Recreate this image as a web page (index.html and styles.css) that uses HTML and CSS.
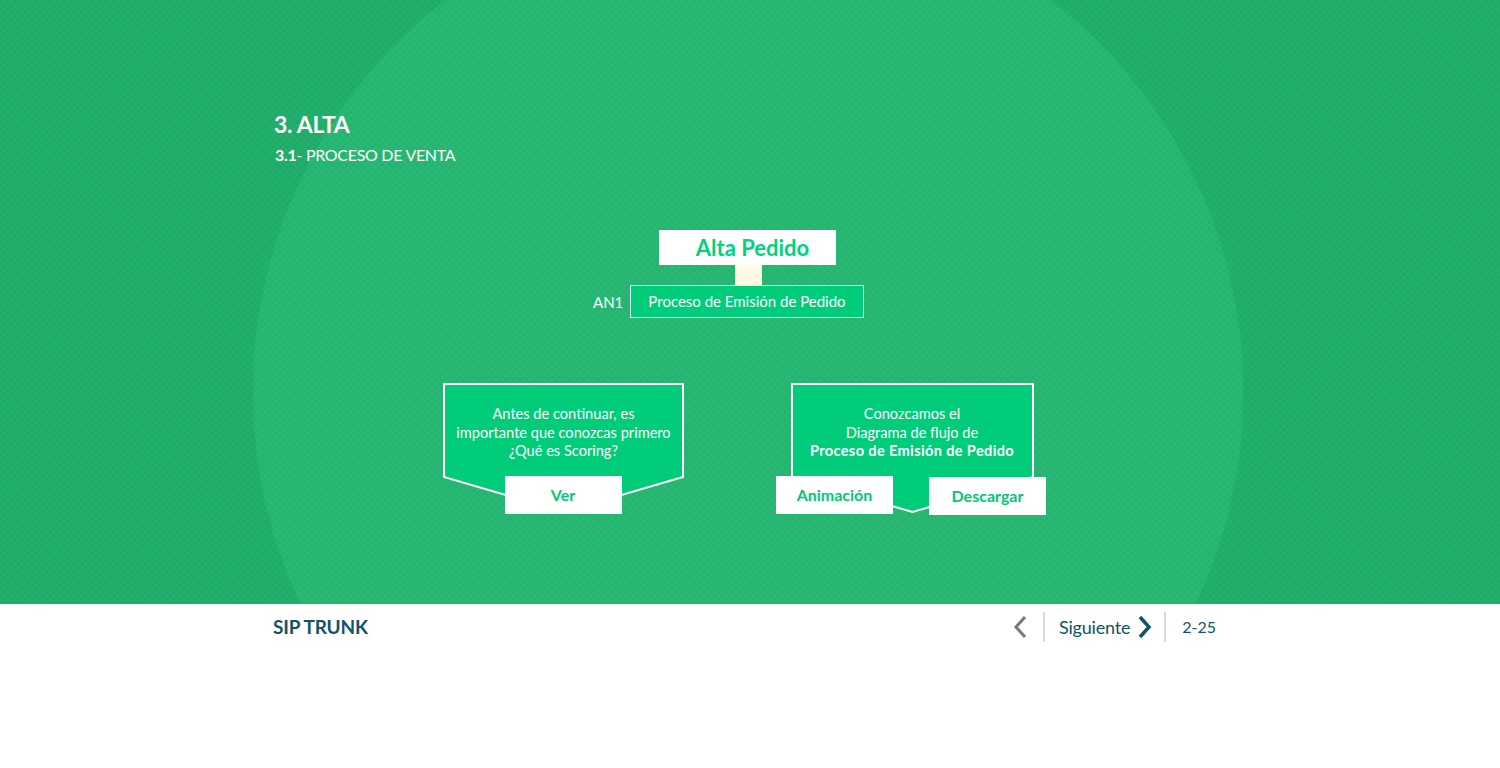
FILE: index.html
```html
<!DOCTYPE html>
<html lang="es">
<head>
<meta charset="utf-8">
<title>SIP TRUNK - Alta</title>
<link rel="stylesheet" href="styles.css">
</head>
<body>
<main class="stage">
  <div class="wrap">
    <header class="heading">
      <h1 class="title">3. ALTA</h1>
      <h2 class="subtitle"><b>3.1</b>- PROCESO DE VENTA</h2>
    </header>
    <section class="diagram">
      <div class="alta">Alta Pedido</div>
      <div class="connector"></div>
      <div class="proc-row">
        <span class="code">AN1</span>
        <div class="proc">Proceso de Emisión de Pedido</div>
      </div>
      <div class="cards">
        <div class="card card-left">
          <svg class="card-shape" width="241" height="131" viewBox="0 0 241 131"><polygon points="1,1 240,1 240,94 120.5,129 1,94" /></svg>
          <p class="card-text">Antes de continuar, es<br>importante que conozcas primero<br>¿Qué es Scoring?</p>
          <div class="btns btns-one"><a class="btn">Ver</a></div>
        </div>
        <div class="card card-right">
          <svg class="card-shape" width="243" height="131" viewBox="0 0 243 131"><polygon points="1,1 242,1 242,94 121.5,129 1,94" /></svg>
          <p class="card-text">Conozcamos el<br>Diagrama de flujo de<br><b>Proceso de Emisión de Pedido</b></p>
          <div class="btns btns-two"><a class="btn">Animación</a><a class="btn btn-low">Descargar</a></div>
        </div>
      </div>
    </section>
  </div>
</main>
<footer class="foot">
  <div class="foot-row">
    <div class="brand">SIP TRUNK</div>
    <nav class="nav">
      <span class="nav-prev"><svg width="16" height="24" viewBox="0 0 16 24"><polyline points="13,2 4,12 13,22" /></svg></span>
      <span class="sep"></span>
      <span class="nav-next">Siguiente <svg width="16" height="24" viewBox="0 0 16 24"><polyline points="3,2 12,12 3,22" /></svg></span>
      <span class="sep"></span>
      <span class="page">2-25</span>
    </nav>
  </div>
</footer>
</body>
</html>
```

FILE: styles.css
```css
* { box-sizing: border-box; }
html, body { margin: 0; padding: 0; }
body {
  width: 1500px;
  height: 768px;
  overflow: hidden;
  background: #ffffff;
  font-family: "Lato", "Open Sans", sans-serif;
  color: #ffffff;
}
.stage {
  height: 604px;
  background-color: #22b06d;
  background-image:
    repeating-linear-gradient(45deg, rgba(0,0,0,0.025) 0 2px, rgba(0,0,0,0) 2px 5px),
    repeating-linear-gradient(-45deg, rgba(0,0,0,0.025) 0 2px, rgba(0,0,0,0) 2px 5px),
    radial-gradient(circle 496px at 748px 392px, #28ba74 99.7%, rgba(40,186,116,0) 100%);
}
.wrap {
  width: 952px;
  margin: 0 auto;
  padding-top: 110px;
}
.title {
  margin: 0;
  font-size: 23px;
  line-height: 28px;
  font-weight: 700;
  letter-spacing: -0.3px;
}
.subtitle {
  margin: 7px 0 0 1px;
  font-size: 16px;
  line-height: 20px;
  font-weight: 400;
  letter-spacing: -0.3px;
}
.subtitle b { font-weight: 700; }
.diagram {
  margin-top: 65px;
  display: flex;
  flex-direction: column;
}
.alta {
  margin-left: 385px;
  width: 177px;
  height: 35px;
  background: #ffffff;
  color: #00d27f;
  font-size: 22px;
  font-weight: 700;
  line-height: 35px;
  text-align: center;
  padding-left: 10px;
}
.connector {
  margin-left: 461px;
  width: 27px;
  height: 20px;
  background: linear-gradient(#fffbea, #fff7e0);
}
.proc-row {
  display: flex;
  align-items: center;
  margin-left: 319px;
}
.code {
  width: 37px;
  font-size: 15px;
  line-height: 20px;
}
.proc {
  width: 234px;
  height: 33px;
  background: #00cc7a;
  border: 1px solid #d8fff0;
  font-size: 15px;
  line-height: 31px;
  text-align: center;
}
.cards {
  margin-top: 65px;
  display: flex;
  align-items: flex-start;
}
.card {
  position: relative;
  height: 131px;
  display: flex;
  flex-direction: column;
  align-items: center;
}
.card-left { margin-left: 169px; width: 241px; }
.card-right { margin-left: 92px; width: 270px; height: 132px; }
.card-shape {
  position: absolute;
  top: 0;
  z-index: 0;
}
.card-left .card-shape { left: 0; }
.card-right .card-shape { left: 15px; }
.card-shape polygon {
  fill: #00cc7a;
  stroke: #ffffff;
  stroke-width: 2;
  stroke-linejoin: miter;
}
.card-text {
  position: relative;
  margin: 22px 0 0;
  font-size: 14.6px;
  line-height: 18.5px;
  text-align: center;
}
.card-right .card-text { padding-left: 2px; }
.card-text b { font-weight: 700; letter-spacing: 0.35px; }
.btns {
  position: relative;
  margin-top: auto;
  display: flex;
  width: 100%;
}
.btns-one { justify-content: center; padding-right: 6px; }
.btns-one .btn { margin-left: 5px; }
.btns-two { justify-content: space-between; align-items: flex-start; }
.btn {
  display: block;
  width: 117px;
  height: 38px;
  background: #ffffff;
  color: #00c878;
  font-size: 16px;
  font-weight: 700;
  line-height: 38px;
  text-align: center;
}
.btn-low { margin-top: 1px; }
.foot { height: 164px; }
.foot-row {
  width: 952px;
  margin: 0 auto;
  height: 45px;
  display: flex;
  align-items: center;
  justify-content: space-between;
}
.brand {
  margin-left: -1px;
  color: #0f5468;
  font-size: 19px;
  font-weight: 700;
  letter-spacing: -0.2px;
}
.nav {
  display: flex;
  align-items: center;
  margin-right: 10px;
  color: #0f5468;
}
.nav svg { display: block; fill: none; stroke-width: 3; }
.nav-prev svg { stroke: #7a7a7a; }
.nav-prev { margin-right: 15px; }
.sep {
  width: 2px;
  height: 30px;
  background: #d9d9d9;
}
.nav-next {
  display: flex;
  align-items: center;
  gap: 7px;
  margin: 0 11px 0 14px;
  font-size: 18px;
  letter-spacing: -0.2px;
}
.nav-next svg { stroke: #0f5468; stroke-width: 3.5; }
.page {
  margin-left: 16px;
  font-size: 16px;
}
```
